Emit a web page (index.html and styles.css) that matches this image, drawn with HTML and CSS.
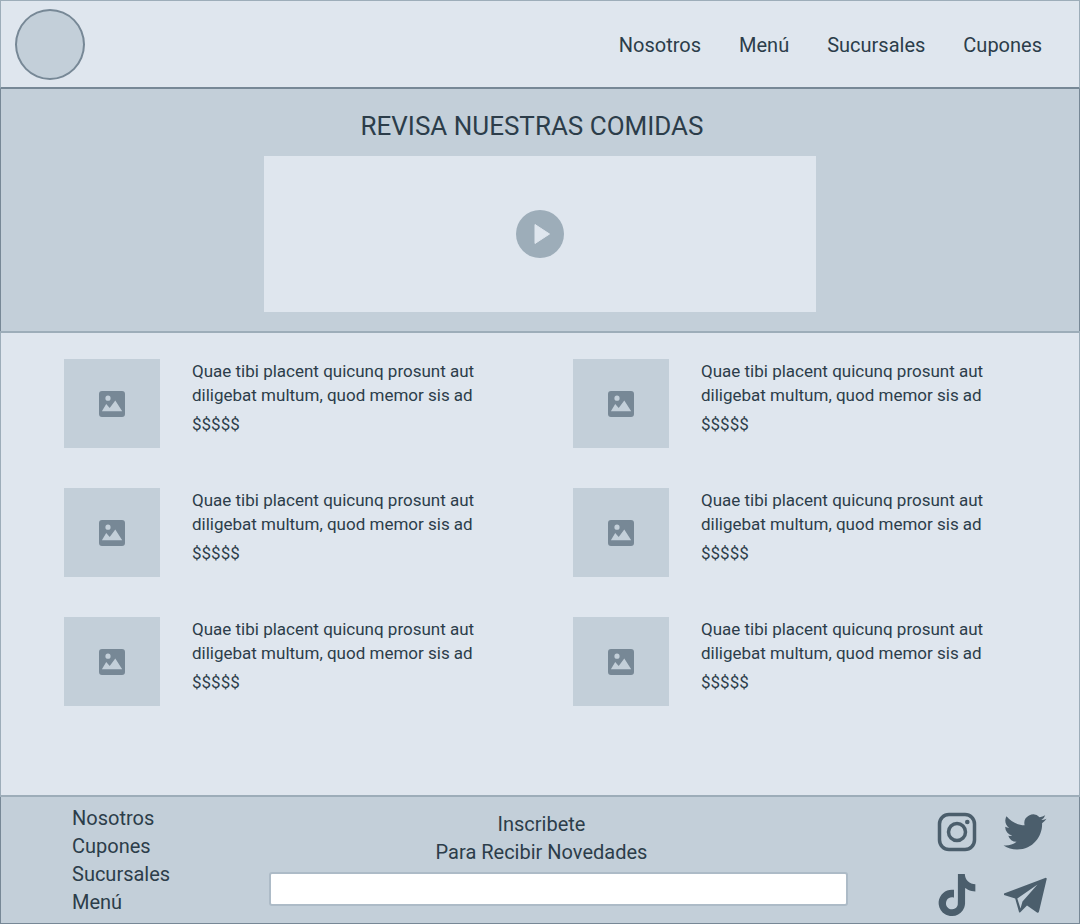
FILE: index.html
```html
<!DOCTYPE html>
<html lang="es">
<head>
<meta charset="utf-8">
<meta name="viewport" content="width=device-width, initial-scale=1">
<title>Revisa nuestras comidas</title>
<link rel="stylesheet" href="styles.css">
</head>
<body>
<svg class="sprite" aria-hidden="true">
  <symbol id="image" viewBox="0 0 26 26">
    <path class="image-frame" fill-rule="evenodd" d="M3 0h20a3 3 0 0 1 3 3v20a3 3 0 0 1-3 3H3a3 3 0 0 1-3-3V3a3 3 0 0 1 3-3zM9 4.600a2.600 2.600 0 1 0 0 5.200a2.600 2.600 0 1 0 0-5.200zM2.900 20.300h20.300L16.300 9.500l-5.600 7.600-3.500-4z"/>
  </symbol>
</svg>
<header class="header">
  <a class="logo" href="#" aria-label="Inicio"></a>
  <nav class="nav" aria-label="Principal">
    <a href="#nosotros">Nosotros</a>
    <a href="#menu">Menú</a>
    <a href="#sucursales">Sucursales</a>
    <a href="#cupones">Cupones</a>
  </nav>
</header>
<section class="hero">
  <h1 class="hero-title">REVISA NUESTRAS COMIDAS</h1>
  <button class="video" type="button" aria-label="Reproducir video">
    <svg class="play" viewBox="0 0 48 48" aria-hidden="true"><circle cx="24" cy="24" r="24"/><path d="M19 14.500v19L33.500 24z"/></svg>
  </button>
</section>
<main class="dishes">
  <article class="dish">
    <div class="thumb"><svg class="thumb-icon" aria-hidden="true"><use href="#image"/></svg></div>
    <div class="dish-text"><p>Quae tibi placent quicunq prosunt aut diligebat multum, quod memor sis ad</p><p class="price">$$$$$</p></div>
  </article>
  <article class="dish">
    <div class="thumb"><svg class="thumb-icon" aria-hidden="true"><use href="#image"/></svg></div>
    <div class="dish-text"><p>Quae tibi placent quicunq prosunt aut diligebat multum, quod memor sis ad</p><p class="price">$$$$$</p></div>
  </article>
  <article class="dish">
    <div class="thumb"><svg class="thumb-icon" aria-hidden="true"><use href="#image"/></svg></div>
    <div class="dish-text"><p>Quae tibi placent quicunq prosunt aut diligebat multum, quod memor sis ad</p><p class="price">$$$$$</p></div>
  </article>
  <article class="dish">
    <div class="thumb"><svg class="thumb-icon" aria-hidden="true"><use href="#image"/></svg></div>
    <div class="dish-text"><p>Quae tibi placent quicunq prosunt aut diligebat multum, quod memor sis ad</p><p class="price">$$$$$</p></div>
  </article>
  <article class="dish">
    <div class="thumb"><svg class="thumb-icon" aria-hidden="true"><use href="#image"/></svg></div>
    <div class="dish-text"><p>Quae tibi placent quicunq prosunt aut diligebat multum, quod memor sis ad</p><p class="price">$$$$$</p></div>
  </article>
  <article class="dish">
    <div class="thumb"><svg class="thumb-icon" aria-hidden="true"><use href="#image"/></svg></div>
    <div class="dish-text"><p>Quae tibi placent quicunq prosunt aut diligebat multum, quod memor sis ad</p><p class="price">$$$$$</p></div>
  </article>
</main>
<footer class="footer">
  <nav class="footer-nav" aria-label="Pie de página">
    <a href="#nosotros">Nosotros</a>
    <a href="#cupones">Cupones</a>
    <a href="#sucursales">Sucursales</a>
    <a href="#menu">Menú</a>
  </nav>
  <form class="signup">
    <label class="signup-label" for="email">Inscribete<br>Para Recibir Novedades</label>
    <input class="signup-input" id="email" type="email">
  </form>
  <div class="social">
    <a href="#instagram" aria-label="Instagram"><svg viewBox="0 0 44 44"><rect class="line" x="4.500" y="4.500" width="35" height="35" rx="9.500"/><circle class="line" cx="22" cy="22" r="8.500"/><circle cx="32.300" cy="12" r="2.300"/></svg></a>
    <a href="#twitter" aria-label="Twitter"><svg viewBox="-.3 -.3 24.600 24.600"><path d="M23.953 4.570a10 10 0 01-2.825.775 4.958 4.958 0 002.163-2.723c-.951.555-2.005.959-3.127 1.184a4.920 4.920 0 00-8.384 4.482C7.690 8.095 4.067 6.130 1.640 3.162a4.822 4.822 0 00-.666 2.475c0 1.710.870 3.213 2.188 4.096a4.904 4.904 0 01-2.228-.616v.060a4.923 4.923 0 003.946 4.827 4.996 4.996 0 01-2.212.085 4.936 4.936 0 004.604 3.417 9.867 9.867 0 01-6.102 2.105c-.390 0-.779-.023-1.170-.067a13.995 13.995 0 007.557 2.209c9.053 0 13.998-7.496 13.998-13.985 0-.210 0-.420-.015-.630A9.935 9.935 0 0024 4.590z"/></svg></a>
    <a href="#tiktok" aria-label="TikTok"><svg viewBox="-.5 -.5 25 25"><path d="M12.525.020c1.310-.020 2.610-.010 3.910-.020.080 1.530.630 3.090 1.750 4.170 1.120 1.110 2.700 1.620 4.240 1.790v4.030c-1.440-.050-2.890-.350-4.200-.970-.570-.260-1.100-.590-1.620-.930-.010 2.920.010 5.840-.020 8.750-.080 1.400-.540 2.790-1.350 3.940-1.310 1.920-3.580 3.170-5.910 3.210-1.430.080-2.860-.310-4.080-1.030-2.020-1.190-3.440-3.370-3.650-5.710-.020-.500-.030-1-.010-1.490.180-1.900 1.120-3.720 2.580-4.960 1.660-1.440 3.980-2.130 6.150-1.720.020 1.480-.040 2.960-.040 4.440-.990-.320-2.150-.230-3.020.370-.630.410-1.110 1.040-1.360 1.750-.210.510-.150 1.070-.140 1.610.240 1.640 1.820 3.020 3.500 2.870 1.120-.010 2.190-.660 2.770-1.610.190-.330.400-.670.410-1.060.100-1.790.060-3.570.070-5.360.010-4.030-.010-8.050.020-12.070z"/></svg></a>
    <a href="#telegram" aria-label="Telegram"><svg viewBox="0 0 44 44"><path fill-rule="evenodd" d="M42.800 4.700L1 20.500v1.500l11.200 3.500L16 39q.5 1 1.300.3L24 32.500l10 7q1.500.7 2-1L43.800 5.500zM34.500 11.500L19.500 28.500 17.500 35.500 14.300 25.500z"/></svg></a>
  </div>
</footer>
</body>
</html>
```
FILE: styles.css
```css
:root {
  --light: #dfe6ee;
  --mid: #c3cfd9;
  --line: #9dadb9;
  --line-dark: #778896;
  --ink: #2c3d4a;
  --icon: #4b5e6c;
}

* { box-sizing: border-box; margin: 0; padding: 0; }

body {
  display: flex;
  flex-direction: column;
  min-height: 100vh;
  background: var(--light);
  color: var(--ink);
  font-family: Roboto, "Liberation Sans", sans-serif;
  font-size: 20px;
  line-height: 28px;
}

a { color: inherit; text-decoration: none; }
.sprite { display: none; }

.header {
  display: flex;
  align-items: center;
  justify-content: space-between;
  padding: 8px 37px 7px 14px;
  border: 1px solid var(--line);
  border-bottom: 2px solid var(--line-dark);
}

.logo {
  width: 70px;
  height: 71px;
  border: 2px solid var(--line-dark);
  border-radius: 50%;
  background: var(--mid);
}

.nav { display: flex; flex-wrap: wrap; gap: 0 38px; }

.hero {
  display: flex;
  flex-direction: column;
  align-items: center;
  gap: 14px;
  padding: 21px 24px 19px;
  background: var(--mid);
  border: solid var(--line-dark);
  border-width: 0 1px;
}

.hero-title {
  padding-right: 16px;
  font-size: 26px;
  font-weight: 400;
  line-height: 32px;
}

.video {
  display: flex;
  align-items: center;
  justify-content: center;
  width: 100%;
  max-width: 552px;
  height: 156px;
  border: 0;
  background: var(--light);
}

.play { width: 48px; height: 48px; fill: var(--line); }
.play path { fill: var(--light); stroke: var(--light); stroke-linejoin: round; }

.dishes {
  flex: 1;
  display: grid;
  grid-template-columns: 1fr 1fr;
  align-content: start;
  gap: 40px;
  padding: 26px 37px 40px 63px;
  border: 1px solid var(--line);
  border-width: 2px 1px;
}

.dish { display: flex; gap: 32px; font-size: 17px; line-height: 24px; }
.dish-text { max-width: 312px; }
.price { margin-top: 5px; }

.thumb {
  display: flex;
  flex: none;
  align-items: center;
  justify-content: center;
  width: 96px;
  height: 89px;
  background: var(--mid);
}

.thumb-icon { width: 26px; height: 26px; fill: var(--line-dark); }

.footer {
  display: grid;
  grid-template-columns: 110px 1fr 112px;
  gap: 87px;
  padding: 7px 32px 6px 71px;
  background: var(--mid);
  border: solid var(--line-dark);
  border-width: 0 1px 1px;
}

.footer-nav { display: flex; flex-direction: column; }

.signup { display: flex; flex-direction: column; gap: 6px; padding-top: 6px; }
.signup-label { padding-right: 34px; text-align: center; }

.signup-input {
  width: 100%;
  height: 34px;
  padding: 0 8px;
  border: 2px solid #adbbc7;
  border-radius: 3px;
  background: #fff;
  color: inherit;
  font: inherit;
}

.social {
  display: grid;
  grid-template-columns: 44px 44px;
  align-content: start;
  gap: 19px 24px;
  padding-top: 6px;
}

.social svg { display: block; width: 44px; height: 44px; fill: var(--icon); }
.social .line { fill: none; stroke: var(--icon); stroke-width: 3.5; }
```
